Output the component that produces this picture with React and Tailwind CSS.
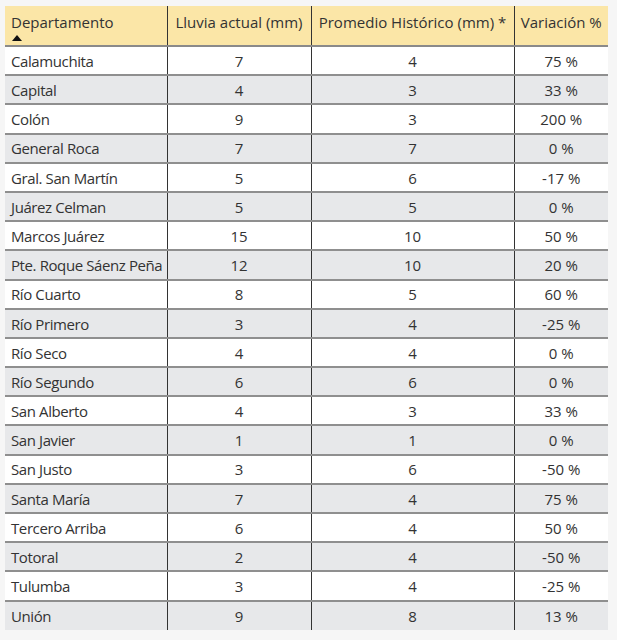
import React from "react";

const rows = [
  ["Calamuchita", 7, 4, "75 %"],
  ["Capital", 4, 3, "33 %"],
  ["Colón", 9, 3, "200 %"],
  ["General Roca", 7, 7, "0 %"],
  ["Gral. San Martín", 5, 6, "-17 %"],
  ["Juárez Celman", 5, 5, "0 %"],
  ["Marcos Juárez", 15, 10, "50 %"],
  ["Pte. Roque Sáenz Peña", 12, 10, "20 %"],
  ["Río Cuarto", 8, 5, "60 %"],
  ["Río Primero", 3, 4, "-25 %"],
  ["Río Seco", 4, 4, "0 %"],
  ["Río Segundo", 6, 6, "0 %"],
  ["San Alberto", 4, 3, "33 %"],
  ["San Javier", 1, 1, "0 %"],
  ["San Justo", 3, 6, "-50 %"],
  ["Santa María", 7, 4, "75 %"],
  ["Tercero Arriba", 6, 4, "50 %"],
  ["Totoral", 2, 4, "-50 %"],
  ["Tulumba", 3, 4, "-25 %"],
  ["Unión", 9, 8, "13 %"],
];

export default function App() {
  return (
    <div className="w-[617px] h-[640px] bg-[#f6f6f6] pt-[6px] pl-[5px] font-['Open_Sans',sans-serif] text-[#333] text-[15px]">
      <table className="border-collapse table-fixed w-[603px]">
        <colgroup>
          <col className="w-[162px]" />
          <col className="w-[144px]" />
          <col className="w-[203px]" />
          <col className="w-[94px]" />
        </colgroup>
        <thead>
          <tr className="bg-[#fbe6a7] h-[40px] border-b-2 border-[#8a8a8a]">
            <th className="font-normal text-left align-top pl-[6px] pt-[6px] leading-[20px] border-r border-[#333]">
              Departamento
              <div className="w-0 h-0 border-l-[5px] border-r-[5px] border-b-[6px] border-l-transparent border-r-transparent border-b-[#111] mt-[3px] ml-[1px]" />
            </th>
            <th className="font-normal text-center align-top pt-[6px] leading-[20px] border-r border-[#333]">
              Lluvia actual (mm)
            </th>
            <th className="font-normal text-center align-top pt-[6px] leading-[20px] border-r border-[#333]">
              Promedio Histórico (mm) *
            </th>
            <th className="font-normal text-center align-top pt-[6px] leading-[20px]">
              Variación %
            </th>
          </tr>
        </thead>
        <tbody>
          {rows.map((r, i) => (
            <tr
              key={r[0]}
              className={`h-[29.2px] ${i % 2 ? "bg-[#e7e8ea]" : "bg-white"} ${i < rows.length - 1 ? "border-b-2 border-[#8f8f8f]" : ""}`}
            >
              <td className="pl-[6px] pt-[1px] pb-0 whitespace-nowrap tracking-[-0.4px] border-r border-[#333]">{r[0]}</td>
              <td className="text-center pt-[1px] pb-0 border-r border-[#333]">{r[1]}</td>
              <td className="text-center pt-[1px] pb-0 border-r border-[#333]">{r[2]}</td>
              <td className="text-center pt-[1px] pb-0">{r[3]}</td>
            </tr>
          ))}
        </tbody>
      </table>
    </div>
  );
}
